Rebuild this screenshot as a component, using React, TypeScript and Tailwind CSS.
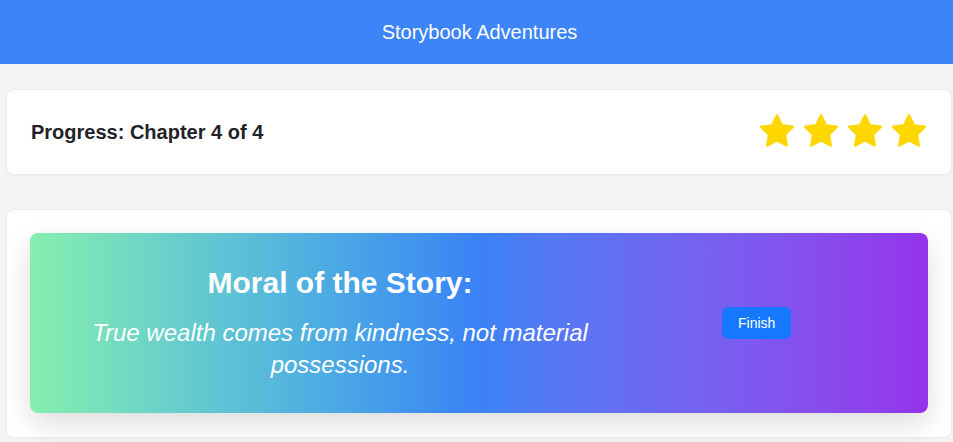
const STAR_PATH =
  "M908.1 353.1l-253.9-36.9L540.7 86.1c-3.1-6.3-8.2-11.4-14.5-14.5-15.8-7.8-35-1.3-42.9 14.5L369.8 316.2l-253.9 36.9c-7 1-13.4 4.3-18.3 9.3a32.05 32.05 0 00.6 45.3l183.7 179.1-43.4 252.9a31.95 31.95 0 0046.4 33.7L512 754l227.1 119.4c6.2 3.3 13.4 4.4 20.3 3.2 17.4-3 29.1-19.5 26.1-36.9l-43.4-252.9 183.7-179.1c5-4.9 8.3-11.3 9.3-18.3 2.7-17.5-9.5-33.7-27-36.3z";

function Star() {
  return (
    <svg viewBox="64 64 896 896" className="w-9 h-9" fill="#ffd700">
      <path d={STAR_PATH} />
    </svg>
  );
}

export default function App() {
  const chapter = 4;
  const total = 4;

  return (
    <div className="min-h-screen bg-[#f4f4f4] font-['Liberation_Sans',Arial,sans-serif]">
      <header className="h-16 bg-[#3c84f7] flex items-center justify-center pl-[6px]">
        <h1 className="text-xl text-white">Storybook Adventures</h1>
      </header>

      <main className="ml-[6px] mr-[1px] pt-[25px] flex flex-col gap-[34px]">
        <div className="bg-white rounded-lg border border-[#ebebeb] shadow-[0_1px_2px_rgba(0,0,0,0.03)] p-6 flex items-center justify-between">
          <span className="text-xl font-bold text-[#1f2329]">
            Progress: Chapter {chapter} of {total}
          </span>
          <div className="flex gap-2">
            {Array.from({ length: 4 }).map((_, i) => (
              <Star key={i} />
            ))}
          </div>
        </div>

        <div className="bg-white rounded-lg border border-[#ebebeb] pt-[23px] px-[23px] pb-6">
          <div className="rounded-lg bg-gradient-to-r from-[#86efac] via-[#3b82f6] to-[#9333ea] shadow-[0_10px_28px_rgba(0,0,0,0.14)] py-8 px-[30px] flex items-center">
            <div className="w-[560px] text-center text-white">
              <h2 className="text-3xl font-bold">Moral of the Story:</h2>
              <p className="mt-4 text-2xl italic px-6">
                True wealth comes from kindness, not material possessions.
              </p>
            </div>
            <button
              type="button"
              className="ml-[102px] px-4 py-1.5 rounded-md bg-[#1677ff] text-sm text-white"
            >
              Finish
            </button>
          </div>
        </div>
      </main>
    </div>
  );
}
